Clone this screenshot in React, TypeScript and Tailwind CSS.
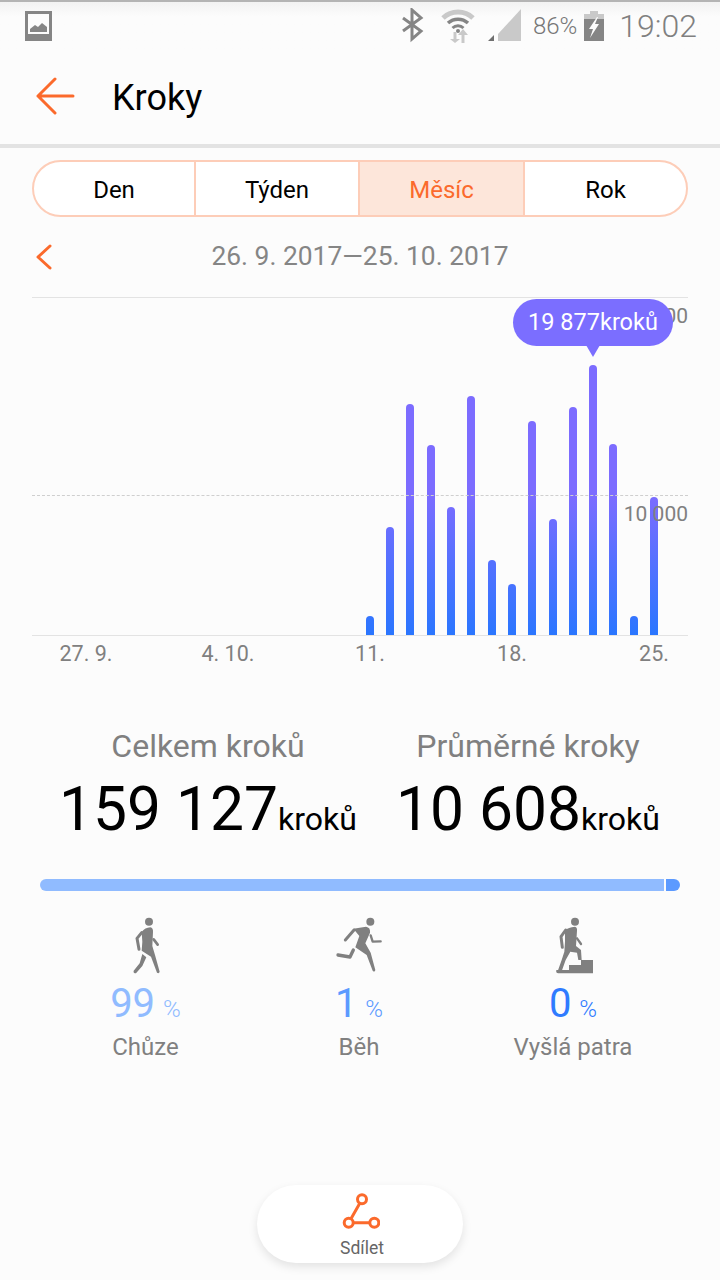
const bars = [19, 108, 231, 190, 128, 239, 75, 51, 214, 116, 228, 270, 191, 19, 138]
const axis = ['27. 9.', '4. 10.', '11.', '18.', '25.']

function ImageIcon() {
  return (
    <svg width="27" height="30" viewBox="0 0 27 30" className="text-[#858585]">
      <path fill="currentColor" fillRule="evenodd" d="M0 0h27v30H0zM3 3v20h21V3z" />
      <path fill="currentColor" d="M5 21v-3l5-4 3 2 4-4 5 4v5z" />
    </svg>
  )
}

function StatusIcons() {
  return (
    <svg width="120" height="36" viewBox="0 0 120 36" className="shrink-0">
      {/* bluetooth */}
      <path d="M1 10l18 13-9 8V2l9 8-18 13" fill="none" stroke="#858585" strokeWidth="3" />
      {/* wifi */}
      <path d="M41 10a22 22 0 0 1 30 0" fill="none" stroke="#c9c9c9" strokeWidth="5" />
      <path d="M46 15a15 15 0 0 1 20 0" fill="none" stroke="#858585" strokeWidth="3.500" />
      <path d="M50.500 20a8 8 0 0 1 11 0" fill="none" stroke="#858585" strokeWidth="3" />
      <circle cx="56" cy="23" r="2" fill="#858585" />
      <path d="M51.500 24h3v7h3.500l-5 4-5-4h3.500z" fill="#c9c9c9" />
      <path d="M59.500 35v-8H56l5-6 5 6h-3.500v8z" fill="#c9c9c9" />
      {/* signal */}
      <path d="M96 33v-7l23-25v32z" fill="#c9c9c9" />
      <path d="M86 33h6v-6z" fill="#6f6f6f" />
    </svg>
  )
}

function Battery() {
  return (
    <svg width="20" height="30" viewBox="0 0 20 30">
      <path d="M6 0h8v3h6v9H0V3h6z" fill="#c9c9c9" />
      <path d="M0 8h20v22H0z" fill="#858585" />
      <path d="M13 6 5 18h4l-3 9 9-14h-4l3-7z" fill="#fcfcfc" />
    </svg>
  )
}

function WalkIcon() {
  return (
    <svg width="60" height="70" viewBox="-27 0 180 210" className="text-[#808080]" fill="currentColor">
      <circle cx="72" cy="35" r="12" />
      <path d="M50 66Q60 53 76 52 85 54 84 66L82 108 90 135 104 185Q102 192 96 188L78 140 50 122 52 95Z" />
      <path d="M52 132 64 142 52 168 33 190Q24 190 26 182L44 160Z" />
      <path d="M50 68 36 85 42 118" fill="none" stroke="currentColor" strokeWidth="9" strokeLinecap="round" strokeLinejoin="round" />
      <path d="M86 88 98 104" fill="none" stroke="currentColor" strokeWidth="8" strokeLinecap="round" />
    </svg>
  )
}

function RunIcon() {
  return (
    <svg width="60" height="70" viewBox="-3 0 180 210" className="text-[#808080]" fill="currentColor">
      <circle cx="121" cy="35" r="12" />
      <path d="M70 56 108 50Q122 52 120 68L106 100 122 128 136 180Q134 188 128 182L110 135 76 112 88 78Z" />
      <path d="M72 60 46 90" fill="none" stroke="currentColor" strokeWidth="9" strokeLinecap="round" />
      <path d="M122 76 128 95 152 94" fill="none" stroke="currentColor" strokeWidth="7" strokeLinecap="round" strokeLinejoin="round" />
      <path d="M70 120 60 141 24 135" fill="none" stroke="currentColor" strokeWidth="10" strokeLinecap="round" strokeLinejoin="round" />
    </svg>
  )
}

function StairsIcon() {
  return (
    <svg width="60" height="70" viewBox="-6 0 180 210" className="text-[#808080]" fill="currentColor">
      <circle cx="90" cy="35" r="12" />
      <path d="M60 60Q70 52 90 50 97 52 96 62L93 108 108 120 110 150H100L96 128 76 125 62 150 50 184H38L50 150 58 125 60 95Z" />
      <path d="M62 60 48 80 52 112" fill="none" stroke="currentColor" strokeWidth="9" strokeLinecap="round" strokeLinejoin="round" />
      <path d="M96 85 108 102" fill="none" stroke="currentColor" strokeWidth="7" strokeLinecap="round" />
      <path d="M108 150H144V190H40Q32 190 34 180H72V165H108Z" />
    </svg>
  )
}

function ShareIcon() {
  return (
    <svg width="40" height="38" viewBox="0 0 40 38" fill="none" stroke="#fb6a2c" strokeWidth="3">
      <circle cx="22" cy="7.300" r="4.500" />
      <circle cx="8.700" cy="30.700" r="4.500" />
      <circle cx="34.300" cy="30.700" r="4.500" />
      <path d="M19.800 11.200 11 26.800M13.200 30.700h16.600" />
    </svg>
  )
}

function Stat({ icon, value, label, color }: { icon: React.ReactNode; value: string; label: string; color: string }) {
  return (
    <div className="flex flex-col items-center">
      <div className="flex h-[70px] items-center">{icon}</div>
      <div className={`mt-[-1px] flex h-[50px] items-baseline gap-[8px] ${color}`}>
        <span className="text-[40px] leading-[50px]">{value}</span>
        <span className="text-[24px] font-light">%</span>
      </div>
      <div className="mt-[2px] text-[24px] leading-[32px] text-[#808080]">{label}</div>
    </div>
  )
}

export default function App() {
  return (
    <div className="relative h-[1280px] w-[720px] overflow-hidden bg-[#fcfcfc] font-['Roboto',sans-serif]">
      <div className="h-[2px] bg-[#b4b4b4]" />
      <div className="flex h-[48px] items-center bg-gradient-to-b from-[#f2f2f2] to-[#fcfcfc] to-[30%] pl-[25px] pr-[23px]">
        <ImageIcon />
        <div className="ml-auto flex items-center">
          <StatusIcons />
          <span className="ml-[11px] text-[24px] font-light text-[#777]">86%</span>
          <span className="ml-[7px]"><Battery /></span>
          <span className="ml-[15px] text-[32px] font-light text-[#808080]">19:02</span>
        </div>
      </div>

      <div className="flex h-[94px] items-center pl-[36px]">
        <svg width="40" height="40" viewBox="0 0 40 40" fill="none" stroke="#fb6a2c" strokeWidth="3" strokeLinecap="round" strokeLinejoin="round">
          <path d="M19 2 2 19l17 17M2 19h35" />
        </svg>
        <h1 className="ml-[36px] mt-[2px] text-[36px] font-normal text-black">Kroky</h1>
      </div>
      <div className="h-[4px] bg-[#e3e3e3]" />

      <div className="mx-[32px] mt-[12px] flex h-[57px] overflow-hidden rounded-full border-2 border-[#fdcdb8] bg-white text-[24px] text-black">
        <div className="flex w-[160px] items-center justify-center pt-[2px]">Den</div>
        <div className="flex w-[164px] items-center justify-center border-l-2 border-[#fdcdb8] pt-[2px]">Týden</div>
        <div className="flex w-[167px] items-center justify-center border-x-2 border-[#fdcdb8] bg-[#fde6da] pt-[2px] text-[#fb6a2c]">Měsíc</div>
        <div className="flex flex-1 items-center justify-center pt-[2px]">Rok</div>
      </div>

      <div className="relative mt-[20px] flex h-[40px] items-center justify-center text-[26.400px] text-[#858585]">
        <svg className="absolute left-[36px] top-[7px]" width="16" height="26" viewBox="0 0 16 26" fill="none" stroke="#fb6a2c" strokeWidth="3" strokeLinecap="round" strokeLinejoin="round">
          <path d="M14 2 2 13l12 11" />
        </svg>
        26. 9. 2017—25. 10. 2017
      </div>

      <div className="relative mx-[32px] mt-[20px] flex h-[339px] items-end justify-end gap-[12.300px] border-y border-[#e3e3e3] pr-[30px]">
        {bars.map((h, i) => (
          <div
            key={i}
            className="w-[8px] rounded-t-[4px] bg-[linear-gradient(to_top,#2a76ff_0,#7c6cff_140px)]"
            style={{ height: h }}
          />
        ))}
        <div className="absolute inset-x-0 top-[197px] border-t border-dashed border-[#cfcfcf]" />
        <span className="absolute right-0 top-[4px] text-[21px] leading-[28px] text-[#808080]">20 000</span>
        <span className="absolute right-0 top-[202px] text-[21px] leading-[28px] text-[#808080]">10 000</span>
        <div className="absolute left-[481px] top-[1px] flex h-[47px] w-[160px] items-center justify-center rounded-full bg-[#7b6eff] pt-[1px] text-[23.500px] text-white">
          19 877kroků
          <div className="absolute left-[73px] top-[46px] h-0 w-0 border-x-[7px] border-t-[12px] border-x-transparent border-t-[#7b6eff]" />
        </div>
      </div>

      <div className="ml-[15px] mt-[4px] flex text-[21.500px] leading-[28px] text-[#808080]">
        {axis.map(t => (
          <div key={t} className="w-[142px] shrink-0 text-center">{t}</div>
        ))}
      </div>

      <div className="mt-[58px] flex pl-[48px]">
        <div className="w-[320px] text-center">
          <div className="text-[32px] leading-[40px] text-[#808080]">Celkem kroků</div>
          <div className="mt-[9px] h-[70px] text-[60.500px] leading-[70px] text-black">159 127<span className="text-[32px]">kroků</span></div>
        </div>
        <div className="w-[320px] text-center">
          <div className="text-[32px] leading-[40px] text-[#808080]">Průměrné kroky</div>
          <div className="mt-[9px] h-[70px] text-[60.500px] leading-[70px] text-black">10 608<span className="text-[32px]">kroků</span></div>
        </div>
      </div>

      <div className="mx-[40px] mt-[34px] flex h-[12px] gap-[2px] overflow-hidden rounded-full">
        <div className="w-[624px] bg-[#90bbff]" />
        <div className="flex-1 bg-[#5c9aff]" />
      </div>

      <div className="mt-[19px] grid grid-cols-[213px_214px_214px] pl-[39px]">
        <Stat icon={<WalkIcon />} value="99" label="Chůze" color="text-[#90bbff]" />
        <Stat icon={<RunIcon />} value="1" label="Běh" color="text-[#5c9aff]" />
        <Stat icon={<StairsIcon />} value="0" label="Vyšlá patra" color="text-[#2f7bff]" />
      </div>

      <div className="absolute bottom-[17px] left-[257px] flex h-[78px] w-[206px] flex-col items-center rounded-full bg-white pt-[7px] shadow-[0_4px_10px_rgba(0,0,0,0.10)]">
        <ShareIcon />
        <span className="ml-[4px] mt-[8px] text-[17.500px] leading-[20px] text-[#666]">Sdílet</span>
      </div>
    </div>
  )
}
